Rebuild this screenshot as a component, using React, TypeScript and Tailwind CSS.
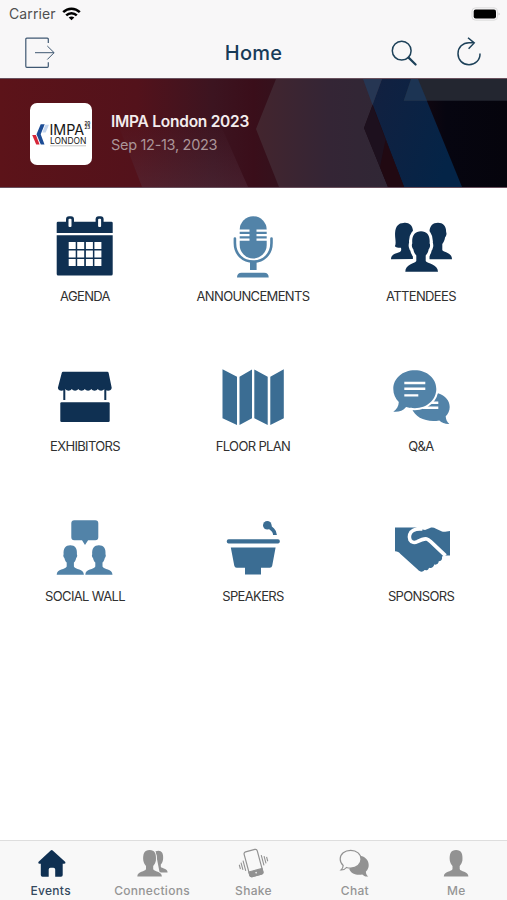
import React, { useState } from 'react';

const NAVY = '#0f3052';
const STEEL = '#5283a8';
const BLUE = '#3b6d93';

const AgendaIcon = () => (
  <svg width="66" height="66" viewBox="0 0 66 66" fill={NAVY}>
    <path d="M6 9.7h53.4q1.3 0 1.3 1.3v9.9h-56V11q0-1.3 1.3-1.3z" />
    <path d="M4.7 23.3h56V62q0 1.5-1.5 1.5h-53q-1.5 0-1.5-1.5z" />
    {[18, 47.6].map((x) => (
      <g key={x}>
        <rect x={x - 4} y="4.3" width="8" height="11.5" rx="3" />
        <rect x={x - 1.5} y="6.8" width="3" height="8.2" rx="1" fill="#fff" />
      </g>
    ))}
    {[30, 38.5, 47].map((y) =>
      [16.7, 25.2, 33.9, 42.4].map((x) => <rect key={`${x}-${y}`} x={x} y={y} width="7" height="7" fill="#fff" />)
    )}
  </svg>
);

const MicIcon = () => (
  <svg width="66" height="66" viewBox="0 0 66 66" fill={STEEL}>
    <rect x="19.7" y="4.3" width="27" height="42.2" rx="13.5" />
    <path d="M19 17.4h10.5v2.3H19zM19 21.9h10.5v2.3H19zM19 26.4h10.5v2.3H19zM36.5 17.4H47v2.3H36.5zM36.5 21.9H47v2.3H36.5zM36.5 26.4H47v2.3H36.5z" fill="#fff" />
    <path d="M14.9 26.5V31c0 11.5 8.1 18.6 18.3 18.6S51.5 42.5 51.5 31v-4.5" fill="none" stroke={STEEL} strokeWidth="2.6" strokeLinecap="round" />
    <path d="M30 49h6.6v9H30z" />
    <path d="M17 65.6c0-3.2 1.5-4.9 4.5-4.9h22.7c3 0 4.5 1.7 4.5 4.9z" />
  </svg>
);

const AttendeesIcon = () => (
  <svg width="66" height="66" viewBox="0 0 66 66" fill={NAVY}>
    <path d="M3 47.2c0-4 2.8-5.2 8.8-7.2 1.5-.5 1.7-2.6 1.1-4.200-2 .2-4.900-.2-6-1.500 1.700-3.500-.2-8.500.2-13.500.4-6.600 3.500-9.900 8.300-9.900 5-1 9 2 9.500 7v29.200z" />
    <path d="M41.500 20c0-6 3.300-9.200 8.500-9.200s8.400 3.400 8.100 9.200c1 2-.1 4.300-1 5.300-.5 3.200-1.600 5.300-2.800 6.700v6c1 2.400 9.700 2.300 9.700 9.200H41.500z" />
    <path d="M17.300 59.700c0-7.700 9.500-8 11-10.700v-5.500c-1.300-1.200-2.500-3.500-3-6.200-1.200-1-2-4.400-1-6C23.500 23.500 27 19.200 33 19.200s9.300 4.300 8.600 12.100c1 1.600.3 5-.9 6-.5 2.700-1.700 5-3 6.200V49c1.500 2.700 12.300 3 12.300 10.700z" stroke="#fff" strokeWidth="6.400" paintOrder="stroke" strokeLinejoin="round" />
  </svg>
);

const ExhibitorsIcon = () => (
  <svg width="66" height="66" viewBox="0 0 66 66" fill={NAVY}>
    <path d="M11 9.700h44.300q1 0 1.300 1l3.100 15c0 3.600-5.500 3.900-7.400 1.300-1.600 2.200-4.900 2.200-6.500 0-1.600 2.200-4.900 2.200-6.500 0-1.600 2.200-4.900 2.200-6.500 0-1.600 2.200-4.900 2.200-6.500 0-1.600 2.200-4.900 2.200-6.500 0-1.600 2.200-4.900 2.200-6.500 0-1.900 2.600-7.400 2.300-7.400-1.300l3.900-15q.3-1 1.200-1z" />
    <path d="M11.300 26h2v12h-2zM52.300 26h2v12h-2z" />
    <rect x="8.300" y="40.300" width="49.400" height="19.700" rx="1.200" />
  </svg>
);

const FloorPlanIcon = () => (
  <svg width="66" height="66" viewBox="0 0 66 66" fill={BLUE}>
    <path d="M2.500 7.300 17 14.800V63L2.500 56.200zM19.500 14.800 32 7.500v48.700L19.500 63zM34.300 7.500l13.400 7.300V63l-13.400-6.800zM50.300 14.800 63.800 7.300v48.900L50.300 63z" />
  </svg>
);

const QuestionsIcon = () => (
  <svg width="66" height="66" viewBox="0 0 66 66" fill={STEEL}>
    <path d="M50 31.300c7.500 2.500 11.700 7.500 11.700 13.700 0 4-1.700 7-4 9.300.2 3 1.200 5.500 3.600 7.600-3.700.3-7.500-1.200-10-3.500-12 2.200-24.300-2.200-27.600-12.400z" />
    <path d="M30 39.600h20.300v2.400H30zM35 44.600h15.300V47H35z" fill="#fff" />
    <path d="M26.800 8.300C14.500 8.300 5.300 16.400 5.300 27c0 5 2 9.500 5.500 13-.2 4-2 7.500-5.500 9.700 5 .6 9.600-.8 12.800-4.700 2.700.8 5.500 1.200 8.700 1.200 12.300 0 21.500-8.600 21.500-19.200S39.100 8.300 26.800 8.300z" stroke="#fff" strokeWidth="4" paintOrder="stroke" />
    <path d="M16.300 19.800h21v2.400h-21zM16.300 25.600h21V28h-21zM16.300 32.200h14v2.400h-14z" fill="#fff" />
  </svg>
);

const SocialIcon = () => (
  <svg width="66" height="66" viewBox="0 0 66 66" fill={STEEL}>
    <path d="M22.300 8.300h21q3 0 3 3v14q0 3-3 3h-7.200L33 32.900l-3-4.600h-7.700q-3 0-3-3v-14q0-3 3-3z" />
    {[0, 28.6].map((x) => (
      <path key={x} transform={`translate(${x} 0)`} d="M4.700 62.700c0-6.300 8.900-5 10-8.300v-4c-1.200-1-2-2.700-2.300-4.500-1-.8-1.400-2.600-.8-3.700-.4-5.700 2-8.900 6.700-8.900s7.100 3.200 6.600 8.900c.7 1.100.2 2.900-.7 3.700-.3 1.800-1.100 3.500-2.300 4.500v4c1.100 3.300 10 2 10 8.300z" />
    ))}
  </svg>
);

const SpeakersIcon = () => (
  <svg width="66" height="66" viewBox="0 0 66 66" fill={BLUE}>
    <rect x="6.800" y="27.300" width="53" height="4.200" rx="1.800" />
    <path d="M10.800 35.600h44.800l-3.400 18.200q-.4 2-2.400 2H41v6.600H25v-6.600h-8.300q-2 0-2.400-2z" />
    <circle cx="47.300" cy="13.300" r="4.300" />
    <path d="m49 14.500 3.800 3.400q2.200 2 2.200 5.200" fill="none" stroke={BLUE} strokeWidth="3.800" />
  </svg>
);

const SponsorsIcon = () => (
  <svg width="66" height="66" viewBox="0 0 66 66" fill={BLUE}>
    <path d="M7 15.400h20.500L37 18l5-2c2-.8 4-.3 6 .7l6 2.900c2.700.8 5-.6 8-.6v24.600h-4.500l-3.600 1c.8 2.700-.7 4.800-3 4.500-.4 2.900-2.400 4-4.700 3.400-.6 2.900-2.800 4-5.200 3.200-.7 2.400-2.200 2.800-4.500 2.400-2 2.400-4.500 2-6.800-.5L12.500 42C11 40 9.500 39.400 7 39.200z" />
    <path d="M26 14h9.500v3.600z" fill="#fff" />
    <path d="M34.500 17c-3.700-.4-6.800 0-9.300 1.300-3.500 1.700-4.700 6.500-3.200 9.600 1.500 2.800 4.700 3 7.300 1.800 3-1.600 6.700-3.200 9.400-2.700 1.500.3 2.800 1.500 4 2.600l14.800 14" fill="none" stroke="#fff" strokeWidth="3.600" strokeLinejoin="round" />
  </svg>
);

// head and shoulders used by the Me and Connections tabs
const PERSON = 'M3.800 28.500c0-5.400 8.200-4.800 8.700-7.500v-3c-1.400-1.400-2.300-3.400-2.700-5.400C9.200 6 10.800 2 16.100 2s6.900 4 6.300 10.600c-.4 2-1.300 4-2.700 5.400v3c.5 2.700 8.700 2.100 8.700 7.500z';

const HomeIcon = () => (
  <svg width="32" height="32" viewBox="0 0 32 32" fill={NAVY}>
    <path d="M15.700 2.500q1-.8 2 0l12.400 11.300q1 1.900-1 1.900h-1.400V27q0 1.700-1.700 1.700h-5.800v-7.200q0-1.800-1.800-1.800h-2.900q-1.800 0-1.800 1.800v7.200H7.500q-1.700 0-1.700-1.700V15.700H4.600q-2 0-1-1.900z" />
  </svg>
);

const ConnectionsIcon = () => (
  <svg width="32" height="32" viewBox="0 0 32 32" fill="#929292">
    <path d="M19.500 3.300c5-2 8.300.7 7.600 7.700-.3 2.400-1 4.300-2.300 5.600v2.200c.8 2 6.800 1.200 6.800 5.800h-8z" />
    <path d={PERSON} transform="translate(-2.500 0)" stroke="#f8f8f8" strokeWidth="1.800" paintOrder="stroke" />
  </svg>
);

const ShakeIcon = () => (
  <svg width="32" height="32" viewBox="0 0 32 32" fill="none" stroke="#929292">
    <g transform="rotate(-15 16.500 15)">
      <rect x="9.700" y="2.200" width="13.600" height="25.600" rx="2" strokeWidth="1.200" />
      <path d="M9.700 22.500h13.600V26q0 1.800-1.800 1.800h-10Q9.700 27.800 9.700 26z" fill="#929292" />
      <circle cx="16.500" cy="25" r=".8" fill="#f8f8f8" stroke="none" />
      <path d="M7 10v10.500M4.500 11.500V19M2.300 13v4.500M26 9.500V20M28.500 11v7.500M30.700 12.500V17" strokeWidth="1.100" />
    </g>
  </svg>
);

const ChatIcon = () => (
  <svg width="32" height="32" viewBox="0 0 32 32" fill="#929292">
    <path d="M20 7.500c6 .7 9.700 4.500 9.700 9.500 0 2.600-.9 4.900-2.800 6.500 0 2 .6 3.700 2.400 4.900-2.400.5-4.500-.3-6-1.900-5.800 1.200-11-.8-13-5.300z" />
    <path d="M11.700 2.300c-6 0-10.500 3.800-10.500 8.800 0 2.600 1.100 4.800 3 6.400-.1 1.800-.8 3.300-2.200 4.500 2.200.1 4-.6 5.400-2.500 1.300.4 2.800.6 4.300.6 6 0 10.300-3.900 10.300-8.900s-4.300-8.900-10.300-8.900z" fill="#f8f8f8" stroke="#929292" strokeWidth="1.200" />
  </svg>
);

const MeIcon = () => (
  <svg width="32" height="32" viewBox="0 0 32 32" fill="#929292">
    <path d={PERSON} />
  </svg>
);

const menuItems = [
  { label: 'AGENDA', icon: <AgendaIcon /> },
  { label: 'ANNOUNCEMENTS', icon: <MicIcon /> },
  { label: 'ATTENDEES', icon: <AttendeesIcon /> },
  { label: 'EXHIBITORS', icon: <ExhibitorsIcon /> },
  { label: 'FLOOR PLAN', icon: <FloorPlanIcon /> },
  { label: 'Q&A', icon: <QuestionsIcon /> },
  { label: 'SOCIAL WALL', icon: <SocialIcon /> },
  { label: 'SPEAKERS', icon: <SpeakersIcon /> },
  { label: 'SPONSORS', icon: <SponsorsIcon /> },
];

const tabs = [
  { label: 'Events', icon: <HomeIcon /> },
  { label: 'Connections', icon: <ConnectionsIcon /> },
  { label: 'Shake', icon: <ShakeIcon /> },
  { label: 'Chat', icon: <ChatIcon /> },
  { label: 'Me', icon: <MeIcon /> },
];

const StatusBar = () => (
  <div className="flex h-[27px] items-center justify-between pl-[9px] pr-[6px]">
    <div className="flex items-center gap-[6px]">
      <span className="text-[14px] leading-none tracking-[0.1px] text-[#505050]">Carrier</span>
      <svg width="19" height="14" viewBox="0 0 19 14" fill="none" stroke="#000" strokeWidth="2.500">
        <path d="M1.200 5.200c4.700-4.600 11.900-4.600 16.600 0M4.200 8.300c3-2.900 7.600-2.900 10.600 0" />
        <path d="M9.500 13.300 6.700 10.500c1.500-1.500 4.100-1.500 5.600 0z" fill="#000" stroke="none" />
      </svg>
    </div>
    <svg width="30" height="14" viewBox="0 0 30 14">
      <rect x="1" y=".8" width="25.500" height="12.400" rx="3.500" fill="#f8f7f8" stroke="#dddcdd" strokeWidth="1" />
      <rect x="2.700" y="2.500" width="22.300" height="9" rx="2" fill="#000" />
      <path d="M27.600 5.500q2 1.500 0 3z" fill="#bbb" />
    </svg>
  </div>
);

const NavBar = () => (
  <div className="flex h-[51px] items-center">
    <div className="flex flex-1 pl-[24px]">
      <svg width="32" height="32" viewBox="0 0 32 32" fill="none" stroke="#3f5872" strokeWidth="1.200">
        <path d="M24.300 6V2.200q0-1-1-1H2.800q-1 0-1 1v27.100q0 1 1 1h20.500q1 0 1-1v-4" />
        <path d="M11 15.700h19M23.300 9l6.800 6.700-6.800 6.800" strokeWidth="1" />
      </svg>
    </div>
    <h1 className="text-[20px] font-medium leading-none tracking-[0.2px] text-[#173b58]">Home</h1>
    <div className="flex flex-1 items-center justify-end gap-[37px] pr-[24px]">
      <svg width="28" height="28" viewBox="0 0 28 28" fill="none" stroke="#1d4159">
        <circle cx="11.700" cy="11.700" r="9.400" strokeWidth="1.500" />
        <path d="m18.600 18.600 7 6.900" strokeWidth="2.200" strokeLinecap="round" />
      </svg>
      <svg width="28" height="32" viewBox="0 0 28 32" fill="none" stroke="#1d4159" strokeWidth="1.500">
        <path d="M25 16.500c.3 6.500-4.700 11.200-11 11.200-6.200 0-11-4.600-11-11 0-6.300 4.700-11 11-11h5" />
        <path d="m13 .7 6.200 5.200-5.600 5.800" />
      </svg>
    </div>
  </div>
);

const EventLogo = () => (
  <svg width="62" height="62" viewBox="0 0 62 62" className="shrink-0 rounded-[7px] bg-white">
    <path d="M10.700 21.300h4l-4 10 3.800 10.200h-3.700L6.500 31.300z" fill="#1c4c95" />
    <path d="M15.400 21.800h3.600l-3.300 7.700h-3.400z" fill="#c4d5ed" />
    <path d="M2.200 32h3.700l3.700 9.500H6.200z" fill="#d72638" />
    <text x="19.500" y="32.300" fontSize="14" textLength="34.700" lengthAdjust="spacingAndGlyphs" fill="#171717">IMPA</text>
    <text x="20" y="40.600" fontSize="8.800" textLength="36.500" lengthAdjust="spacingAndGlyphs" fill="#171717">LONDON</text>
    <text x="54.500" y="22" fontSize="4.500" fontWeight="700" fill="#171717">20</text>
    <text x="54.500" y="26" fontSize="4.500" fontWeight="700" fill="#171717">23</text>
    <path d="M20 42.800h36" stroke="#b5b5b5" strokeWidth=".8" />
  </svg>
);

const Banner = () => (
  <div className="relative h-[110px] overflow-hidden border-y border-[#69515e] bg-[#5c1319]">
    <svg className="absolute inset-0" width="507" height="108" viewBox="0 0 507 108">
      <defs>
        <linearGradient id="base" x1="0" x2="1">
          <stop offset="0" stopColor="#5c1319" />
          <stop offset=".27" stopColor="#53121b" />
          <stop offset=".42" stopColor="#3c1420" />
          <stop offset=".5" stopColor="#3a0e1a" />
          <stop offset=".56" stopColor="#32121d" />
          <stop offset=".72" stopColor="#200d18" />
          <stop offset=".78" stopColor="#1f0810" />
          <stop offset=".88" stopColor="#060510" />
          <stop offset="1" stopColor="#05040c" />
        </linearGradient>
        <linearGradient id="hex" x1="0" x2="1">
          <stop offset="0" stopColor="#43252e" />
          <stop offset=".55" stopColor="#342535" />
          <stop offset="1" stopColor="#302735" />
        </linearGradient>
        <linearGradient id="stripe" x1="0" x2="1" y1="0" y2=".4">
          <stop offset="0" stopColor="#14203f" />
          <stop offset="1" stopColor="#042447" />
        </linearGradient>
        <linearGradient id="haze" x1="0" x2="0" y1="0" y2="1">
          <stop offset="0" stopColor="#553444" stopOpacity="0" />
          <stop offset="1" stopColor="#553444" stopOpacity=".4" />
        </linearGradient>
      </defs>
      <path d="M0 0h507v108H0z" fill="url(#base)" />
      <path d="M116 40h102l30 68H142z" fill="url(#haze)" />
      <path d="M363 0h55l44 108h-58z" fill="url(#stripe)" />
      <path d="M276 0h106l-18 49 24 59H279l-23-58z" fill="url(#hex)" />
      <path d="m364 49 8.500-22.500L404 108h-16z" fill="#1d101e" />
      <path d="M363 0h19l-9.500 26z" fill="#263653" />
      <path d="m385.500 61 18.500 47h-16l-8-20z" fill="#210912" />
      <path d="M411 0h96v21.700H403.700z" fill="#232630" />
      <path d="M411 0h7l9 21.700h-23.300z" fill="#1c3453" />
    </svg>
    <div className="relative flex items-center gap-[19px] pl-[30px] pt-[24px]">
      <EventLogo />
      <div className="flex flex-col gap-[7px] pb-[3px]">
        <div className="text-[15.5px] font-semibold leading-[16px] tracking-[-0.25px] text-[#f3eced]">IMPA London 2023</div>
        <div className="text-[14.5px] leading-[15px] tracking-[-0.3px] text-[#ab9599]">Sep 12-13, 2023</div>
      </div>
    </div>
  </div>
);

const App = () => {
  const [activeTab, setActiveTab] = useState('Events');

  return (
    <div className="flex h-[900px] w-[507px] flex-col bg-white font-['Inter','Liberation_Sans',sans-serif]">
      <header className="bg-[#f8f7f8]">
        <StatusBar />
        <NavBar />
      </header>
      <Banner />

      <main className="grid flex-1 auto-rows-[150px] grid-cols-3 pl-px pr-[2px] pt-[24px]">
        {menuItems.map((item) => (
          <button key={item.label} className="flex flex-col items-center">
            {item.icon}
            <span className="mt-[10px] whitespace-nowrap text-[13px] leading-[16px] tracking-[-0.65px] text-[#303030]">
              {item.label}
            </span>
          </button>
        ))}
      </main>

      <nav className="grid h-[60px] grid-cols-5 border-t border-[#dedede] bg-[#f8f8f8] pt-[7px]">
        {tabs.map((tab) => (
          <button
            key={tab.label}
            className={`flex flex-col items-center ${activeTab === tab.label ? 'text-[#34495f]' : 'text-[#959595]'}`}
            onClick={() => setActiveTab(tab.label)}
          >
            {tab.icon}
            <span className="mt-[3px] text-[12px] font-medium leading-[15px] tracking-[0.3px]">{tab.label}</span>
          </button>
        ))}
      </nav>
    </div>
  );
};

export default App;
